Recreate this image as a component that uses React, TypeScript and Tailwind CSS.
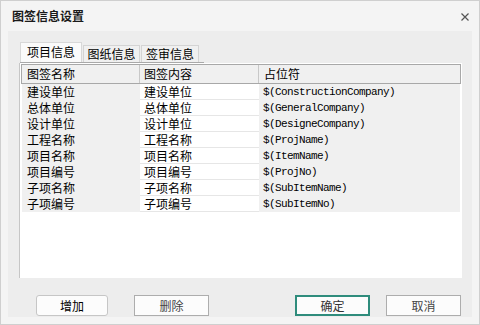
const rows: [string, string, string][] = [
  ["建设单位", "建设单位", "$(ConstructionCompany)"],
  ["总体单位", "总体单位", "$(GeneralCompany)"],
  ["设计单位", "设计单位", "$(DesigneCompany)"],
  ["工程名称", "工程名称", "$(ProjName)"],
  ["项目名称", "项目名称", "$(ItemName)"],
  ["项目编号", "项目编号", "$(ProjNo)"],
  ["子项名称", "子项名称", "$(SubItemName)"],
  ["子项编号", "子项编号", "$(SubItemNo)"],
];

const cjk = "font-['Noto_Sans_CJK_SC','Noto_Sans',sans-serif]";
const mono = "font-['Liberation_Mono','DejaVu_Sans_Mono',monospace]";

export default function App() {
  return (
    <div
      className={`flex h-[325px] w-[480px] flex-col border border-[#cfcfcf] bg-[#f4f4f4] text-[12px] leading-[16px] text-black ${cjk}`}
    >
      {/* title bar */}
      <div className="flex h-[30px] shrink-0 items-center justify-between pl-[11px] pr-[10px]">
        <span className="text-[12px] font-bold text-[#1a1a1a]">图签信息设置</span>
        <svg width="8" height="8" viewBox="0 0 8 8" className="mt-[1px]">
          <path d="M0.5 0.5 L7.5 7.5 M7.5 0.5 L0.5 7.5" stroke="#555" strokeWidth="1.2" />
        </svg>
      </div>

      {/* content panel */}
      <div className="mx-[7px] flex h-[286px] shrink-0 flex-col bg-[#ededed] pt-[12px]">
        {/* tabs */}
        <div className="ml-[12px] flex h-[20px] w-[184px] items-end border-b border-[#a9a9a9]">
          <div className="flex h-[20px] w-[62px] items-center justify-center border border-b-0 border-[#d8d8d8] bg-[#fafafa] pb-[1px]">
            项目信息
          </div>
          <div className="ml-px flex h-[17px] w-[57px] items-center justify-center border border-b-0 border-[#d4d4d4] bg-[#f0f0f0]">
            图纸信息
          </div>
          <div className="ml-px flex h-[17px] w-[58px] items-center justify-center border border-b-0 border-[#d4d4d4] bg-[#f0f0f0]">
            签审信息
          </div>
        </div>

        {/* table */}
        <div className="ml-[11px] flex h-[215px] w-[443px] flex-col border-l border-[#c6c6c6] bg-white pl-px pr-px pt-px">
          <div className="flex h-[20px] border border-[#a8a8a8] bg-[#f0f0f0]">
            <div className="flex w-[118px] items-center border-r border-[#c8c8c8] pl-[5px]">图签名称</div>
            <div className="flex w-[119px] items-center border-r border-[#c8c8c8] pl-[4px]">图签内容</div>
            <div className="flex flex-1 items-center pl-[5px]">占位符</div>
          </div>
          <div className="flex flex-col pl-px">
            {rows.map(([name, content, ph]) => (
              <div key={name} className="flex h-[16px]">
                <div className="flex w-[118px] items-center bg-[#f0f0f0] pl-[5px]">{name}</div>
                <div className="flex w-[119px] items-center border-b border-[#e6e6e6] bg-white pl-[4px]">
                  {content}
                </div>
                <div
                  className={`flex w-[201px] items-center bg-[#f0f0f0] pl-[4px] text-[11px] tracking-[-0.6px] ${mono}`}
                >
                  {ph}
                </div>
              </div>
            ))}
          </div>
        </div>

        {/* buttons */}
        <div className="mt-[17px] flex h-[21px] items-stretch">
          <button className="ml-[28px] w-[72px] rounded-[3px] border border-[#c6c6c6] bg-[#fcfcfc] text-black">
            增加
          </button>
          <button className="ml-[26px] w-[75px] border border-[#adadad] bg-[#fcfcfc] text-[#444]">
            删除
          </button>
          <div className="flex-1" />
          <button className="w-[75px] border-2 border-[#2f8c7c] bg-[#fcfcfc] text-[#333]">确定</button>
          <button className="ml-[16px] mr-[11px] w-[75px] border border-[#adadad] bg-[#fcfcfc] text-[#444]">
            取消
          </button>
        </div>
      </div>
    </div>
  );
}
